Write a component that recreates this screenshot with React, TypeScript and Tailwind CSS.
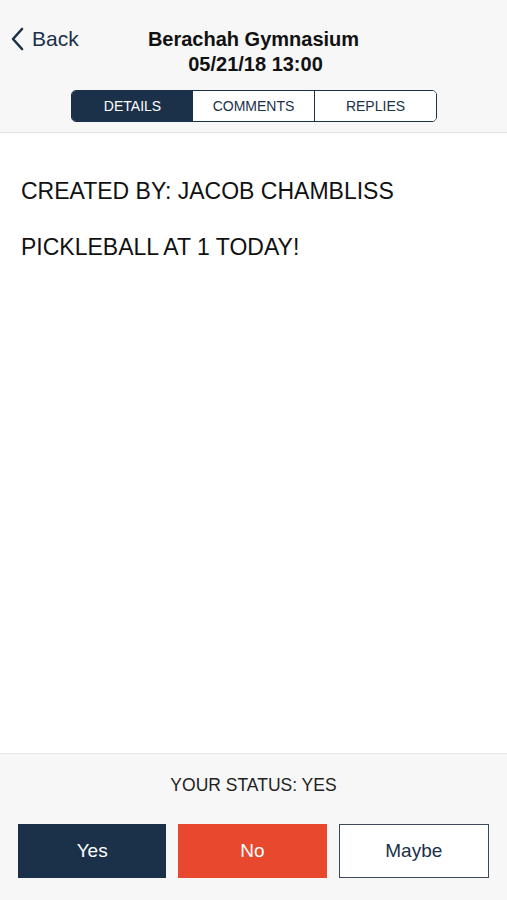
import React from "react";

export default function App() {
  const font = { fontFamily: '"Liberation Sans", Arial, sans-serif' };
  return (
    <div className="w-[507px] h-[900px] flex flex-col bg-white text-[#111]" style={font}>
      <div className="bg-[#f7f7f7] border-b border-[#e2e2e2] h-[133px] flex flex-col">
        <div className="relative pt-[27px] flex flex-col items-center">
          <div className="absolute left-[10px] top-[27px] flex items-center text-[#1b3049]">
            <svg width="16" height="24" viewBox="0 0 16 24" fill="none">
              <path d="M12 2 L3 12 L12 22" stroke="#1b3049" strokeWidth="2.6" strokeLinecap="round" strokeLinejoin="round" />
            </svg>
            <span className="ml-[6px] text-[21px] leading-[24px] text-[#1b3049]">Back</span>
          </div>
          <div className="text-[20px] leading-[25px] font-bold text-center">Berachah Gymnasium</div>
          <div className="text-[20px] leading-[25px] font-bold text-center ml-[4px]">05/21/18 13:00</div>
        </div>
        <div className="flex justify-center mt-[13px] ml-[1px]">
          <div className="flex w-[366px] h-[32px] border border-[#1b3049] rounded-[5px] overflow-hidden text-[14px]">
            <div className="flex-1 bg-[#1b3049] text-white flex items-center justify-center">DETAILS</div>
            <div className="flex-1 bg-white text-[#1b3049] border-r border-[#1b3049] flex items-center justify-center">COMMENTS</div>
            <div className="flex-1 bg-white text-[#1b3049] flex items-center justify-center">REPLIES</div>
          </div>
        </div>
      </div>
      <div className="flex-1 px-[21px] pt-[43px] text-[23px] leading-[30px] text-[#111]">
        <div>CREATED BY: JACOB CHAMBLISS</div>
        <div className="mt-[26px]">PICKLEBALL AT 1 TODAY!</div>
      </div>
      <div className="bg-[#f7f7f7] border-t border-[#e6e6e6] h-[147px] flex flex-col items-center">
        <div className="mt-[20px] text-[17.5px] leading-[22px] text-[#222]">YOUR STATUS: YES</div>
        <div className="mt-[28px] flex gap-[12px] px-[18px] w-full">
          <div className="flex-1 h-[54px] bg-[#1b3049] text-white flex items-center justify-center text-[19px]">Yes</div>
          <div className="flex-1 h-[54px] bg-[#e8482e] text-white flex items-center justify-center text-[19px]">No</div>
          <div className="flex-1 h-[54px] bg-white border border-[#3a4a5c] text-[#1b3049] flex items-center justify-center text-[19px]">Maybe</div>
        </div>
      </div>
    </div>
  );
}
